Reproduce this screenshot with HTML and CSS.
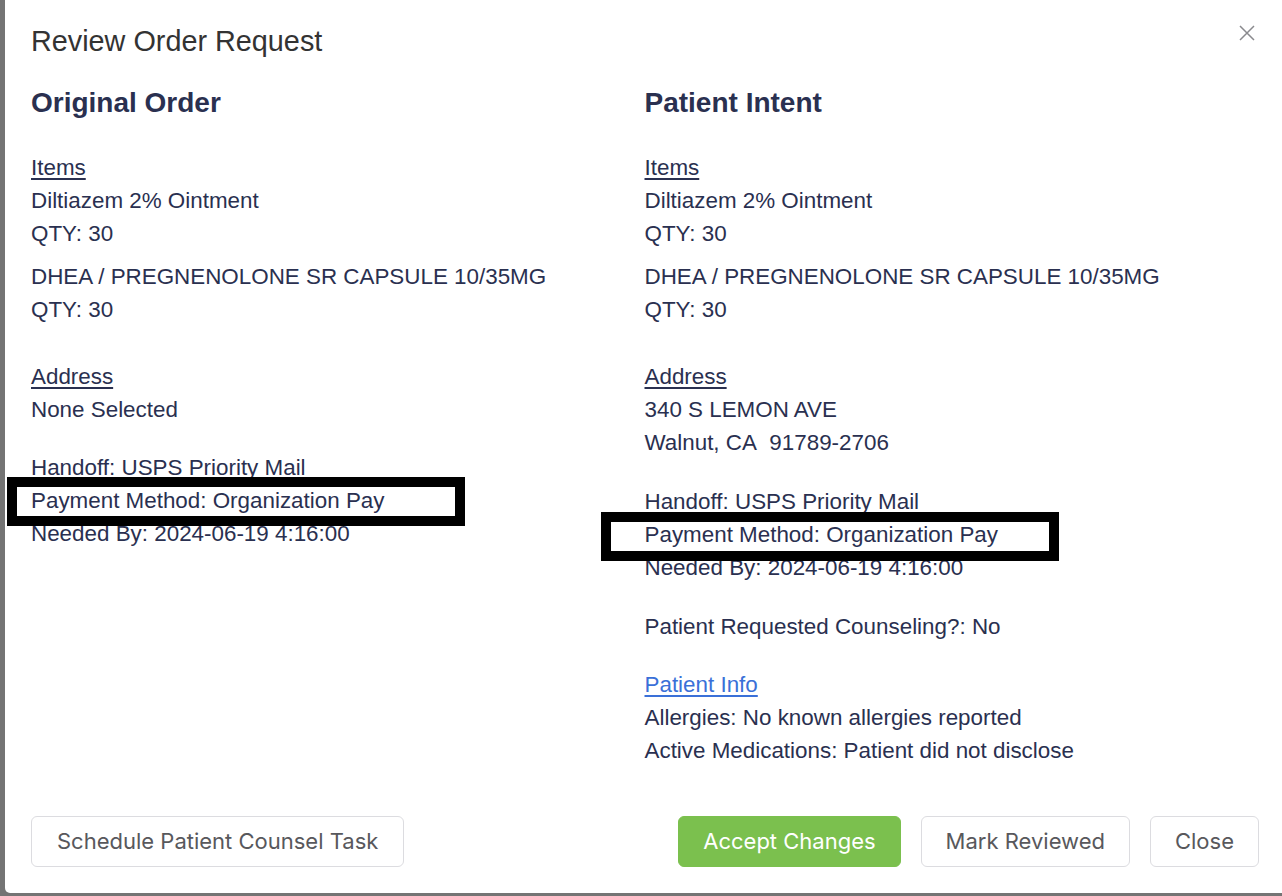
FILE: index.html
```html
<!DOCTYPE html>
<html lang="en">
<head>
<meta charset="utf-8">
<title>Review Order Request</title>
<link rel="stylesheet" href="styles.css">
</head>
<body>
<div class="modal">
  <div class="modal-header">
    <h4 class="modal-title">Review Order Request</h4>
    <button class="close-x" aria-label="Close">
      <svg width="16" height="16" viewBox="0 0 16 16"><path d="M1 1 L15 15 M15 1 L1 15" stroke="#8a8a8e" stroke-width="1.5" fill="none"/></svg>
    </button>
  </div>
  <div class="modal-body">
    <div class="columns">
      <div class="col">
        <h3 class="col-title">Original Order</h3>
        <div class="section section-items">
          <div class="label">Items</div>
          <div class="item"><div class="line">Diltiazem 2% Ointment</div><div class="line">QTY: 30</div></div>
          <div class="item"><div class="line">DHEA / PREGNENOLONE SR CAPSULE 10/35MG</div><div class="line">QTY: 30</div></div>
        </div>
        <div class="section">
          <div class="label">Address</div>
          <div class="line">None Selected</div>
        </div>
        <div class="section">
          <div class="line">Handoff: USPS Priority Mail</div>
          <div class="line marked">Payment Method: Organization Pay<span class="mark mark-left"></span></div>
          <div class="line">Needed By: 2024-06-19 4:16:00</div>
        </div>
      </div>
      <div class="col">
        <h3 class="col-title">Patient Intent</h3>
        <div class="section section-items">
          <div class="label">Items</div>
          <div class="item"><div class="line">Diltiazem 2% Ointment</div><div class="line">QTY: 30</div></div>
          <div class="item"><div class="line">DHEA / PREGNENOLONE SR CAPSULE 10/35MG</div><div class="line">QTY: 30</div></div>
        </div>
        <div class="section">
          <div class="label">Address</div>
          <div class="line">340 S LEMON AVE</div>
          <div class="line">Walnut, CA&nbsp; 91789-2706</div>
        </div>
        <div class="section section-handoff">
          <div class="line">Handoff: USPS Priority Mail</div>
          <div class="line marked">Payment Method: Organization Pay<span class="mark mark-right"></span></div>
          <div class="line">Needed By: 2024-06-19 4:16:00</div>
        </div>
        <div class="section">
          <div class="line">Patient Requested Counseling?: No</div>
        </div>
        <div class="section">
          <a class="link" href="#">Patient Info</a>
          <div class="line">Allergies: No known allergies reported</div>
          <div class="line">Active Medications: Patient did not disclose</div>
        </div>
      </div>
    </div>
  </div>
  <div class="modal-footer">
    <button class="btn btn-wide">Schedule Patient Counsel Task</button>
    <div class="btn-group">
      <button class="btn btn-success">Accept Changes</button>
      <button class="btn">Mark Reviewed</button>
      <button class="btn">Close</button>
    </div>
  </div>
</div>
</body>
</html>
```

FILE: styles.css
```css
html, body {
  margin: 0;
  padding: 0;
}

body {
  background: #747474;
  width: 1282px;
  height: 896px;
  overflow: hidden;
  font-family: "Liberation Sans", Arial, sans-serif;
  font-size: 22.4px;
  color: #2a3050;
}

.modal {
  margin-left: 5px;
  width: 1277px;
  height: 893px;
  background: #ffffff;
  border-bottom-left-radius: 5px;
  box-sizing: border-box;
  padding: 0 23px 0 26px;
  display: flex;
  flex-direction: column;
}

.modal-header {
  display: flex;
  justify-content: space-between;
  align-items: flex-start;
  padding-top: 24px;
}

.modal-title {
  margin: 0;
  font-size: 28.8px;
  font-weight: normal;
  line-height: 34px;
  color: #333333;
}

.close-x {
  margin: 0;
  padding: 0;
  border: 0;
  background: none;
  margin-top: 1px;
  margin-right: 4px;
  width: 16px;
  height: 16px;
  display: block;
}

.close-x svg {
  display: block;
}

.modal-body {
  flex: 1;
}

.columns {
  display: grid;
  grid-template-columns: 613.5px 1fr;
}

.col-title {
  margin: 28px 0 0 0;
  font-size: 28px;
  line-height: 34px;
  font-weight: bold;
  color: #2a3050;
}

.section {
  margin-top: 25px;
}

.section-items {
  margin-top: 31px;
  margin-bottom: 34px;
}

.section-handoff {
  margin-top: 26px;
  margin-bottom: 26px;
}

.label {
  line-height: 33px;
  text-decoration: underline;
  text-underline-offset: 3px;
}

.line {
  line-height: 33px;
  white-space: nowrap;
}

.item + .item {
  margin-top: 10px;
}

.link {
  display: block;
  width: max-content;
  line-height: 33px;
  color: #3a70d8;
  text-decoration: underline;
  text-underline-offset: 3px;
}

.marked {
  position: relative;
}

.mark {
  position: absolute;
  top: -7px;
  width: 458px;
  height: 49px;
  box-sizing: border-box;
  border: 10px solid #000000;
}

.mark-left {
  left: -24px;
}

.mark-right {
  left: -44px;
  top: -6px;
}

.modal-footer {
  display: flex;
  justify-content: space-between;
  align-items: center;
  padding-bottom: 26px;
}

.btn-group {
  display: flex;
  gap: 20px;
}

.btn {
  font-family: Inter, "Liberation Sans", sans-serif;
  font-size: 22px;
  height: 51px;
  padding: 0 24px;
  border: 1px solid #dcdce0;
  border-radius: 6px;
  background: #ffffff;
  color: #58585c;
  line-height: 49px;
  margin: 0;
}

.btn-wide {
  padding: 0 25px;
}

.btn-success {
  background: #7bc04e;
  border-color: #7bc04e;
  color: #ffffff;
}
```
